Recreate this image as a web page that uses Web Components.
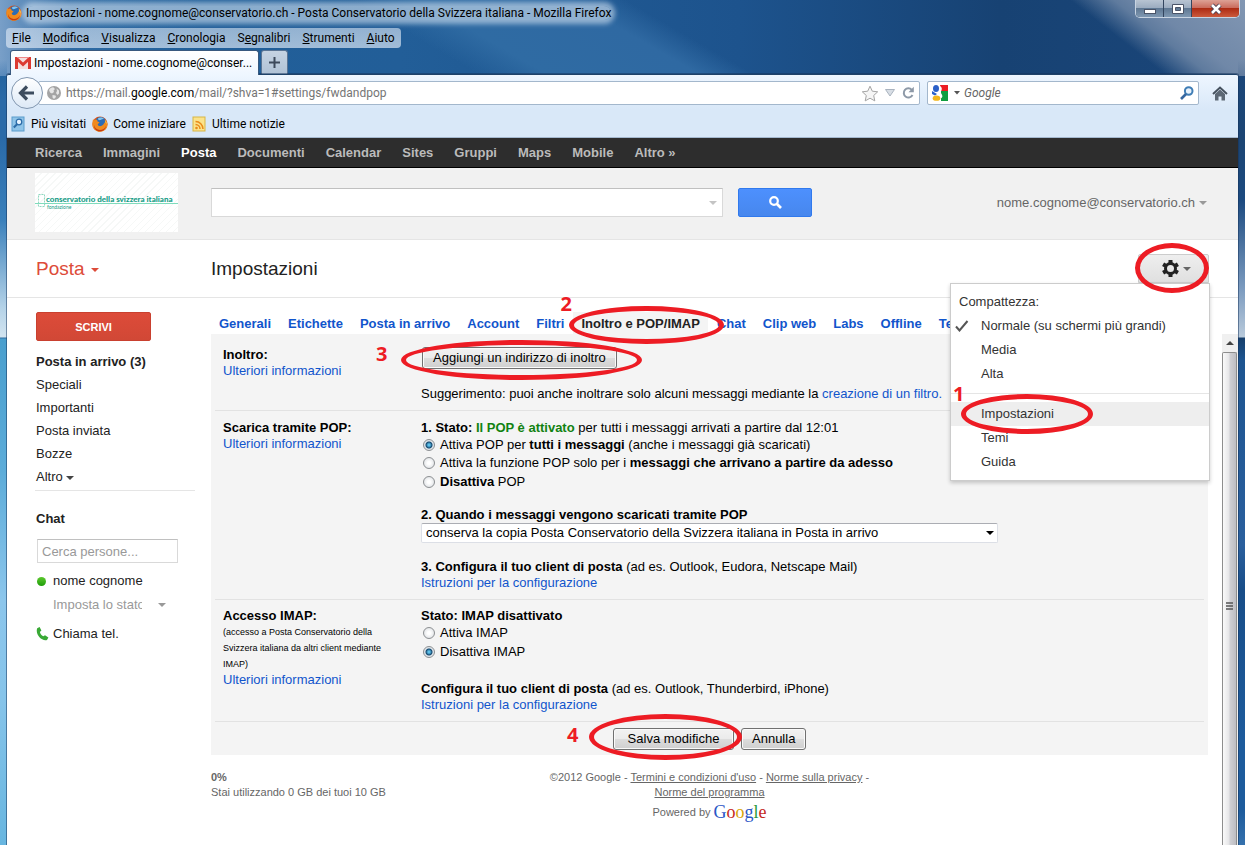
<!DOCTYPE html>
<html lang="it">
<head>
<meta charset="utf-8">
<title>Impostazioni - Posta</title>
<style>
html, body { margin: 0; min-height: 100%; }
body { font: 13px/16px "Liberation Sans", Arial, sans-serif; color: #222; }
</style>
</head>
<body>
<browser-window>
  <title-bar slot="chrome">Impostazioni - nome.cognome@conservatorio.ch - Posta Conservatorio della Svizzera italiana - Mozilla Firefox</title-bar>
  <menu-bar slot="chrome"></menu-bar>
  <tab-strip slot="chrome">Impostazioni - nome.cognome@conser...</tab-strip>
  <nav-toolbar slot="tools"></nav-toolbar>
  <bookmarks-bar slot="tools"></bookmarks-bar>
  <mail-app></mail-app>
</browser-window>

<script>
const define = (name, css, html) => {
  const template = document.createElement('template');
  template.innerHTML = `<style>*,:host{box-sizing:border-box}:host{display:block}a{color:inherit;text-decoration:none}button,input,select{font:inherit;margin:0}${css}</style>${html}`;
  customElements.define(name, class extends HTMLElement {
    constructor() {
      super();
      this.attachShadow({ mode: 'open' }).append(template.content.cloneNode(true));
    }
  });
};

const uiFont = 'font:12px/16px Roboto,"Open Sans",sans-serif;color:#000;';

/* ---------- shared pieces ---------- */

define('drop-arrow', `
  :host{display:inline-block;width:8px;height:4px;border:4px solid transparent;border-top-color:currentColor;border-bottom:0;flex:none}
`, '');

define('firefox-icon', `:host{width:16px;height:16px;flex:none} svg{display:block}`, `
  <svg width="16" height="16" viewBox="0 0 16 16" aria-hidden="true">
    <circle cx="8" cy="8" r="7.6" fill="#d9541b"/>
    <circle cx="8.6" cy="6.4" r="5.4" fill="#2b6cb5"/>
    <path d="M6 2.2c2-1.2 4.600-.8 6 .6-1.500 0-2 .8-3.500 1.200S6 4 6 2.200z" fill="#7fc4ee"/>
    <path d="M1 3.200c.6.2 1 .6 1.300 1.100C3.400 3.500 4.500 3.700 5.400 4c-.4.8 0 1.400.8 1.700.8.200 1.300.3 1.200.9-.2.800-1.700 1-1.600 2 .2 1.600 2.300 2 3.900 1.200 1.700-.8 2.500-2.200 2.600-3.500.5.5.6.9.7 1.300.5-1.500.1-3-.6-4 2.400 1.200 3.400 3.800 2.900 6.500-.7 3.400-3.500 5.600-7.200 5.600C3.800 15.700.4 12.700.4 8.400.4 6.500.7 4.600 1 3.200z" fill="#f08a1c"/>
    <path d="M2 9c.4 3 2.800 4.900 5.800 4.900 3 0 5.200-1.500 6.200-4-.1 3-2.800 5.400-6.200 5.400C4.200 15.300 1.600 12.600 2 9z" fill="#c43c12"/>
    <path d="M13 3.800c1.300 1.200 1.800 3 1.500 4.800-.2-1-.6-1.600-1.100-2 .2-1 .1-2-.4-2.800z" fill="#fbd34a"/>
  </svg>`);

/* A hand-drawn ring with a step number, laid over whatever it wraps */
define('step-mark', `
  :host{display:inline-block;position:relative;vertical-align:top}
  .ring{position:absolute;inset:var(--ring);border:5px solid #ed1c24;border-radius:50%;pointer-events:none;z-index:9}
  .num{position:absolute;left:var(--num-x);top:var(--num-y);font:bold 20px/20px "Open Sans",sans-serif;color:#ed1c24;z-index:9;pointer-events:none}
`, `<slot></slot><span class="ring"></span><span class="num"><slot name="num"></slot></span>`);

/* ---------- browser chrome ---------- */

define('browser-window', `
  :host{min-height:100vh;display:flex;flex-direction:column;padding:0 7px;
    background:
      linear-gradient(180deg,transparent 60px,#2a6aa8 100px,#2a6aa8 137px,#3a80bb 220px,#b5d3e8 308px,#d2e4f0 337px,#2f6da0 338px,#4a9fce 339px,#5cacd9 470px,#8cc6ec 600px,#86c4ea 700px,#68b6e0 845px) left/7px 100% no-repeat,
      linear-gradient(180deg,transparent 60px,#1c4573 140px,#1c4a80 200px,#7d9cc0 290px,#b9cadb 337px,#173f6b 338px,#1d5490 360px,#2a5f9d 545px,#184d88 590px,#1d5b9c 740px,#1d5b9c 810px,#3571ad 845px) right/7px 100% no-repeat,
      linear-gradient(38deg,transparent 56%,#5f7b9e 67%,#7088a8 74%,#8297b3) right top/300px 76px no-repeat,
      linear-gradient(90deg,rgba(150,180,215,.75),rgba(90,140,190,.25) 70px,transparent 200px) left top/100% 76px no-repeat,
      linear-gradient(30deg,transparent 35%,#2f6ba3 40%,#2f69a2 51%,transparent 55%) left top/100% 76px no-repeat,
      linear-gradient(90deg,#20609b,#225e98 400px,#1d538d 740px,#174273 1000px,#1b467a)}
  .tools{border-top:1px solid #1f4268;background:linear-gradient(#eef6ff,#d9e8f8 34px);box-shadow:0 0 0 1px rgba(20,50,90,.5);border-radius:2px 2px 0 0;border-bottom:1px solid #a4b8cf}
  .page{flex:1;display:flex;flex-direction:column;background:#fff;box-shadow:-1px 0 0 rgba(20,50,90,.5),1px 0 0 rgba(20,50,90,.5)}
  ::slotted(mail-app){flex:1}
`, `<slot name="chrome"></slot><div class="tools"><slot name="tools"></slot></div><main class="page"><slot></slot></main>`);

define('title-bar', `
  :host{display:flex;align-items:flex-start;justify-content:space-between;height:26px;${uiFont}}
  .title{display:flex;gap:4px;align-items:center;padding-top:5px;white-space:nowrap;margin-left:-1px}
  .text{background:rgba(225,236,248,.55);box-shadow:0 0 5px 4px rgba(225,236,248,.55);border-radius:8px;line-height:14px}
  .win{display:flex;height:18px;border:1px solid #c8d4e2;border-top:0;border-radius:0 0 5px 5px;margin-right:-2px;box-shadow:inset 0 0 0 1px #2a3c54;overflow:hidden}
  button{border:0;border-right:1px solid #33455e;padding:0;width:28px;background:linear-gradient(#b8c4d2,#9aabbf 48%,#5f7893 50%,#7f98b2);display:grid;place-items:center}
  button.close{width:47px;border-right:0;background:linear-gradient(#dda195,#c9695a 48%,#ad2c14 50%,#cc5a3c)}
`, `<div class="title"><firefox-icon></firefox-icon><span class="text"><slot></slot></span></div>
  <div class="win">
    <button aria-label="Riduci"><svg width="14" height="12"><rect x="1.500" y="6.500" width="11" height="4" fill="#fff" stroke="#4a5468"/></svg></button>
    <button aria-label="Ingrandisci"><svg width="14" height="12"><path d="M1.500 1.500h11v9h-11zM4.500 4.500h5v3h-5z" fill="#fff" fill-rule="evenodd" stroke="#4a5468"/></svg></button>
    <button class="close" aria-label="Chiudi"><svg width="14" height="12"><path d="M3 2l8 8M11 2l-8 8" stroke="#4a4050" stroke-width="4.500"/><path d="M3 2l8 8M11 2l-8 8" stroke="#fff" stroke-width="2.600"/></svg></button>
  </div>`);

define('menu-bar', `
  :host{${uiFont}padding-top:2px;height:24px;margin-left:-1px}
  nav{display:inline-flex;gap:12px;height:20px;align-items:center;padding:0 6px;border-radius:4px;background:linear-gradient(rgba(222,233,246,.6),rgba(222,233,246,.68))}
`, `<nav><a href="#"><u>F</u>ile</a><a href="#"><u>M</u>odifica</a><a href="#"><u>V</u>isualizza</a><a href="#"><u>C</u>ronologia</a><a href="#">S<u>e</u>gnalibri</a><a href="#"><u>S</u>trumenti</a><a href="#"><u>A</u>iuto</a></nav>`);

define('tab-strip', `
  :host{${uiFont}display:flex;gap:2px;height:24px;padding-left:3px}
  .tab{display:flex;align-items:center;gap:3px;width:249px;padding:0 4px;background:linear-gradient(#fff,#eef6ff);border:1px solid #38597f;border-bottom:0;border-radius:3px 3px 0 0;margin-bottom:-1px;white-space:nowrap;position:relative}
  svg{flex:none}
  button{width:27px;border:1px solid #5a7595;border-bottom:0;border-radius:3px 3px 0 0;background:linear-gradient(#c5d3e2,#b0c2d6);padding:0;display:grid;place-items:center}
`, `<div class="tab"><svg width="16" height="12" viewBox="0 0 16 12"><path d="M0 0h16v12H0z" fill="#f4dede"/><path d="M1.500 12V1.500L8 7.500l6.500-6V12" fill="none" stroke="#dc3a32" stroke-width="3"/><path d="M2 .5h12" stroke="#e88"/></svg><span><slot></slot></span></div>
  <button aria-label="Nuova scheda"><svg width="11" height="11"><path d="M5.500 0v11M0 5.500h11" stroke="#3d4a5c" stroke-width="2"/></svg></button>`);

define('nav-toolbar', `
  :host{${uiFont}display:flex;align-items:center;height:36px;padding:0 10px 0 4px}
  .back{width:32px;height:32px;border-radius:50%;border:1px solid #8297b0;background:linear-gradient(#fff,#dde9f6);padding:0;display:grid;place-items:center;flex:none;z-index:1}
  .field{display:flex;align-items:center;height:24px;background:#fff;border:1px solid #a3b7cc;border-radius:2px}
  .url{flex:1;margin-left:-5px;padding:0 4px 0 8px}
  .url p{flex:1;margin:0 0 0 5px;color:#757575} .url b{font-weight:400;color:#000}
  .search{width:272px;margin:0 13px 0 7px;padding:0 4px}
  input{flex:1;min-width:0;border:0;background:none;padding:0 4px;outline:0;font-style:italic;line-height:20px}
  input::placeholder{color:#666;opacity:1}
  svg{flex:none} .gap{margin:0 6px}
  .home{border:0;background:none;padding:0;display:grid}
`, `<button class="back" aria-label="Indietro"><svg width="18" height="16" viewBox="0 0 18 16"><path d="M9 1.500L2.500 8 9 14.500M3 8h13" fill="none" stroke="#3d4c5e" stroke-width="3.200"/></svg></button>
  <div class="field url">
    <svg width="14" height="14" viewBox="0 0 14 14"><circle cx="7" cy="7" r="7" fill="#a4a4a4"/><path d="M2 4c1-2 3-2.800 4.500-2.600L8 3 6.500 4.500 7 6 5 7.500 3 6.500zM9.500 2.500l2.500 2v3L10.500 9 9 7l1-2zM5.500 9l3 .5.5 1.500-2 2-1.500-1.500z" fill="#e6e6e6"/></svg>
    <p>https://mail.<b>google.com</b>/mail/?shva=1#settings/fwdandpop</p>
    <svg width="18" height="17" viewBox="0 0 18 17"><path d="M9 1.200l2.300 5 5.400.6-4 3.700 1.100 5.400L9 13.200l-4.800 2.700 1.100-5.400-4-3.700 5.400-.6z" fill="#f5f5f5" stroke="#a5a5a5"/></svg>
    <svg class="gap" width="10" height="8"><path d="M.5.5h9L5 7z" fill="#d8dee5" stroke="#a9b3bf"/></svg>
    <svg width="14" height="14" viewBox="0 0 14 14"><path d="M10.800 3.800A4.600 4.600 0 1 0 11.500 9" fill="none" stroke="#8d99a7" stroke-width="2"/><path d="M12.800.8v5.500H7.500z" fill="#8d99a7"/></svg>
  </div>
  <div class="field search">
    <svg width="16" height="16" viewBox="0 0 16 16"><path d="M8 0h8v6H9z" fill="#ec1c24"/><path d="M9 6h7v10H9z" fill="#0f9d3f"/><ellipse cx="4" cy="3.500" rx="3" ry="3.500" fill="#2a60c8"/><path d="M0 6l5 3-2 1.500L0 9z" fill="#2a60c8"/><path d="M8 1c4 3 0 5 1 7s3 4-1 6l-2-4 1-4z" fill="#fff"/><ellipse cx="4.500" cy="13.200" rx="3.800" ry="2.600" fill="#f2b61b"/></svg>
    <svg class="gap" style="margin-right:0" width="6" height="4"><path d="M0 0h6L3 3.500z" fill="#555"/></svg>
    <input aria-label="Cerca" placeholder="Google">
    <svg width="14" height="14" viewBox="0 0 14 14"><circle cx="8.700" cy="5" r="3.800" fill="#e8f2fc" stroke="#3f7db5" stroke-width="2"/><path d="M6 8l-5 5" stroke="#3567a0" stroke-width="2.600"/></svg>
  </div>
  <button class="home" aria-label="Home"><svg width="16" height="15" viewBox="0 0 16 15"><path d="M1 8l7-6.500L15 8" fill="none" stroke="#46525f" stroke-width="2"/><path d="M3 8l5-4.500L13 8v6.500H9.500v-4h-3v4H3z" fill="#5c6875"/></svg></button>`);

define('bookmarks-bar', `
  :host{${uiFont}height:26px;padding:0 4px}
  nav{display:flex;gap:6px;height:100%;align-items:center}
  a{display:flex;gap:5px;align-items:center}
`, `<nav>
  <a href="#"><svg width="15" height="16" viewBox="0 0 15 16"><rect x="1" y="1" width="12" height="14" fill="#8fc4e8" stroke="#5a9ccc"/><circle cx="8" cy="6" r="2.800" fill="#e6f4ff" stroke="#2c6ca8" stroke-width="1.300"/><path d="M6 8.200L2.800 11.500" stroke="#2c6ca8" stroke-width="2"/></svg>Più visitati</a>
  <a href="#"><firefox-icon></firefox-icon>Come iniziare</a>
  <a href="#"><svg width="15" height="16" viewBox="0 0 15 16"><rect x="1" y="1" width="12" height="14" fill="#fbe38b" stroke="#d8b545"/><circle cx="4.500" cy="12" r="1.300" fill="#e98b1a"/><path d="M3.500 8.500a4.500 4.500 0 0 1 4.500 4.500M3.500 5.500A7.500 7.500 0 0 1 11 13" fill="none" stroke="#e98b1a" stroke-width="1.500"/></svg>Ultime notizie</a>
</nav>`);

/* ---------- mail application ---------- */

define('google-bar', `
  :host{background:#2d2d2d;border-bottom:1px solid #000;height:30px}
  nav{display:flex;gap:21px;height:100%;align-items:center;padding:1px 0 0 28px;font-weight:bold;color:#bbb}
  .on{color:#fff}
`, `<nav><a href="#">Ricerca</a><a href="#">Immagini</a><a href="#" class="on">Posta</a><a href="#">Documenti</a><a href="#">Calendar</a><a href="#">Sites</a><a href="#">Gruppi</a><a href="#">Maps</a><a href="#">Mobile</a><a href="#">Altro »</a></nav>`);

define('mail-header', `
  :host{display:flex;align-items:center;height:72px;background:#f1f1f1;border-bottom:1px solid #e5e5e5;padding:0 31px 2px 28px}
  .logo{width:143px;height:59px;margin-right:33px;background:repeating-linear-gradient(135deg,#fff 0 4px,#f6f8f7 4px 5px);display:flex;flex-direction:column;justify-content:center;color:#159c86;white-space:nowrap;position:relative}
  .logo .name{font:900 8px/8px Lato,sans-serif;padding-left:11px;border-bottom:1px solid #7fdcbc}
  .logo .sub{font:5px/6px Lato,sans-serif;padding-left:12px}
  .logo svg{position:absolute;left:2px;top:20px}
  .box{width:512px;height:29px;display:grid;align-items:center;margin-right:15px;color:#c4c4c4}
  .box>*{grid-area:1/1}
  .box drop-arrow{justify-self:end;margin-right:6px}
  input{width:100%;height:100%;border:1px solid #d9d9d9;border-top-color:#c0c0c0;background:#fff;padding:0 8px}
  button.go{width:74px;height:29px;border:1px solid #3079ed;border-radius:2px;background:linear-gradient(#4d90fe,#4787ed);display:grid;place-items:center;padding:0}
  .who{margin-left:auto;color:#666;display:flex;gap:4px;align-items:center;border:0;background:none;padding:0;line-height:16px}
  .who drop-arrow{color:#999}
`, `<div class="logo"><svg width="9" height="15"><path d="M1.500 1.500h6v12h-6z" fill="none" stroke="#8fd8c0" stroke-dasharray="2 1"/></svg><span class="name">conservatorio della svizzera italiana</span><span class="sub">fondazione</span></div>
  <div class="box"><input aria-label="Cerca nella posta"><drop-arrow></drop-arrow></div>
  <button class="go" aria-label="Cerca"><svg width="13" height="13" viewBox="0 0 13 13"><circle cx="5" cy="5" r="3.800" fill="none" stroke="#fff" stroke-width="2.200"/><path d="M8 8l4 4" stroke="#fff" stroke-width="2.600"/></svg></button>
  <button class="who">nome.cognome@conservatorio.ch <drop-arrow></drop-arrow></button>`);

define('mail-toolbar', `
  :host{display:flex;align-items:center;height:58px;border-bottom:1px solid #e5e5e5;padding:0 29px;font-size:19px;line-height:24px}
  .posta{width:175px;color:#dd4b39;border:0;background:none;padding:0;display:flex;gap:6px;align-items:center}
  h1{flex:1;font:inherit;margin:0}
  .posta drop-arrow{margin-top:2px}
`, `<button class="posta">Posta <drop-arrow></drop-arrow></button><h1>Impostazioni</h1><gear-menu></gear-menu>`);

define('gear-menu', `
  :host{position:relative;font-size:13px;line-height:24px;z-index:5}
  .gear{--ring:-11px 0 -10px -3px;display:block}
  .gear button{width:71px;height:29px;border:1px solid #ccc;border-radius:2px 2px 0 0;background:linear-gradient(#eee,#e0e0e0);display:flex;gap:4px;align-items:center;justify-content:center;color:#666;padding:0 0 0 6px}
  .menu{position:absolute;top:29px;right:-1px;width:260px;background:#fff;border:1px solid #ccc;box-shadow:0 2px 4px rgba(0,0,0,.2);padding:6px 0;color:#333}
  p{margin:0;padding-left:8px}
  a{display:grid;grid-template-columns:22px 1fr;align-items:center;padding-left:8px}
  a>*{grid-column:2;justify-self:start}
  a svg{grid-column:1;margin-left:-4px}
  a svg+span{grid-row:1} a svg{grid-row:1}
  a.on{background:#eee}
  hr{border:0;border-top:1px solid #e5e5e5;margin:7px 0 8px}
  .one{--ring:-8px -39px -8px -20px;--num-x:-28px;--num-y:-18px}
`, `<step-mark class="gear"><button aria-label="Impostazioni"><svg width="17" height="17" viewBox="0 0 17 17"><circle cx="8.500" cy="8.500" r="5" fill="none" stroke="#222" stroke-width="3"/><path d="M8.500 0v3M8.500 14v3M1.100 4.300l2.600 1.500M13.300 11.200l2.600 1.500M1.100 12.700l2.600-1.500M13.300 5.800l2.600-1.500" stroke="#222" stroke-width="4"/></svg><drop-arrow></drop-arrow></button></step-mark>
  <nav class="menu"><p>Compattezza:</p>
    <a href="#"><svg width="14" height="12"><path d="M1 6.500l3.500 4L12.500 1" fill="none" stroke="#555" stroke-width="2"/></svg><span>Normale (su schermi più grandi)</span></a>
    <a href="#"><span>Media</span></a><a href="#"><span>Alta</span></a><hr>
    <a href="#" class="on"><step-mark class="one">Impostazioni<span slot="num">1</span></step-mark></a>
    <a href="#"><span>Temi</span></a><a href="#"><span>Guida</span></a></nav>`);

define('side-nav', `
  :host{padding:14px 16px 0 29px}
  .write{display:block;width:115px;height:29px;border:1px solid #c9402f;border-radius:2px;background:linear-gradient(#dd4b39,#d14836);color:#fff;font-weight:bold;font-size:11px;padding:0;margin-bottom:9px}
  nav{display:flex;flex-direction:column;border-bottom:1px solid #e5e5e5;padding-bottom:2px;line-height:23px;margin-left:-1px;padding-left:1px}
  nav .more,.me{display:flex;align-items:center;gap:3px}
  .more drop-arrow{color:#444;margin-top:2px}
  h2{font-size:13px;line-height:16px;margin:20px 0 12px}
  .find{display:block;width:141px;height:24px;margin-left:1px;border:1px solid #d9d9d9;border-top-color:#c0c0c0;padding:0 4px}
  input::placeholder{color:#999;opacity:1}
  .me{gap:7px;margin-top:10px}
  .dot{width:9px;height:9px;margin-left:1px;border-radius:50%;background:linear-gradient(#5cc82e,#1f9d0a)}
  .state{display:flex;align-items:center;margin:8px 0 0 17px;color:#999;gap:16px}
  .state input{width:89px;height:16px;border:0;padding:0;background:none;color:inherit}
  .tel{margin-top:13px;gap:4px}
`, `<button class="write">SCRIVI</button>
  <nav><a href="#"><b>Posta in arrivo (3)</b></a><a href="#">Speciali</a><a href="#">Importanti</a><a href="#">Posta inviata</a><a href="#">Bozze</a><a href="#" class="more">Altro <drop-arrow></drop-arrow></a></nav>
  <h2>Chat</h2><input class="find" aria-label="Cerca persone" placeholder="Cerca persone...">
  <div class="me"><span class="dot"></span>nome cognome</div>
  <div class="state"><input aria-label="Stato" value="Imposta lo stato"><drop-arrow></drop-arrow></div>
  <a href="#" class="me tel"><svg width="13" height="14" viewBox="0 0 13 14"><path d="M1.200 1.200L3.600 0l1.800 3.600-1.500 1.400c.3 1.800 1.600 3.500 3.400 4.200L9 8.200l3.400 2.200-1.400 2.600C5.500 14.500-1 7.500 1.200 1.200z" fill="#39a935"/></svg>Chiama tel.</a>`);

define('settings-tabs', `
  nav{display:flex;gap:1px;align-items:flex-end;height:36px;font-weight:bold;color:#15c;white-space:nowrap}
  a{padding:4px 8px 2px;line-height:16px}
  .on{background:#f4f4f4;color:#222}
  .two{--ring:-10px -24px -12px -12px;--num-x:-21px;--num-y:-22px}
`, `<nav><a href="#">Generali</a><a href="#">Etichette</a><a href="#">Posta in arrivo</a><a href="#">Account</a><a href="#">Filtri</a><a href="#" class="on"><step-mark class="two">Inoltro e POP/IMAP<span slot="num">2</span></step-mark></a><a href="#">Chat</a><a href="#">Clip web</a><a href="#">Labs</a><a href="#">Offline</a><a href="#">Temi</a></nav>`);

define('settings-row', `
  :host{display:grid;grid-template-columns:198px 1fr;margin:0 4px;padding:8px;border-bottom:1px solid #e2e2e2}
  .label{padding-right:24px}
`, `<div class="label"><slot name="label"></slot></div><div><slot></slot></div>`);

define('settings-panel', `
  :host{background:#f4f4f4;color:#000}
  settings-row.forward{padding-top:13px}
  settings-row.pop{padding-top:9px}
  a{color:#15c}
  small{display:block;font-size:9px;line-height:16px}
  .green{color:#118211}
  p{margin:0}
  .tip{margin-top:17px}
  .opt{display:flex;gap:5px;align-items:center;line-height:18px}
  .opt.last{line-height:19px}
  .opt input{appearance:none;width:12px;height:12px;border:1px solid #8c8f92;border-radius:50%;background:radial-gradient(#fff 20%,#d5d9dd);margin:0 0 0 2px;flex:none}
  .opt input:checked{background:radial-gradient(circle,#5cc0ea 0 1px,#14486f 3px,#dfe5ea 4px)}
  .block{margin-top:16px}
  .client{margin-top:20px}
  .select{display:grid;width:577px;max-width:100%;align-items:center}
  .select>*{grid-area:1/1}
  .select drop-arrow{justify-self:end;margin-right:4px}
  select{appearance:none;height:20px;border:1px solid #dcdfe6;border-top-color:#abadb3;border-radius:2px;background:#fff;padding:0 4px;color:#000;width:100%}
  button{height:22px;border:1px solid #707070;border-radius:3px;padding:0 10px;color:#000;background:linear-gradient(#f2f2f2,#ebebeb 48%,#ddd 50%,#cfcfcf);box-shadow:inset 0 0 0 1px #fafafa}
  .actions{display:flex;gap:7px;padding:6px 0 5px 402px}
  .three{--ring:-7px -25px -11px -21px;--num-x:-46px;--num-y:-3px;margin-left:1px}
  .four{--ring:-14px -8px -10px -24px;--num-x:-46px;--num-y:-3px}
  .three button,.four button{display:block}
  .four button{min-width:121px}
`, `<settings-row class="forward"><div slot="label"><b>Inoltro:</b><br><a href="#">Ulteriori informazioni</a></div>
    <step-mark class="three"><button>Aggiungi un indirizzo di inoltro</button><span slot="num">3</span></step-mark>
    <p class="tip">Suggerimento: puoi anche inoltrare solo alcuni messaggi mediante la <a href="#">creazione di un filtro.</a></p></settings-row>
  <settings-row class="pop"><div slot="label"><b>Scarica tramite POP:</b><br><a href="#">Ulteriori informazioni</a></div>
    <p><b>1. Stato: <span class="green">Il POP è attivato</span></b> per tutti i messaggi arrivati a partire dal 12:01</p>
    <label class="opt"><input type="radio" name="pop" checked><span>Attiva POP per <b>tutti i messaggi</b> (anche i messaggi già scaricati)</span></label>
    <label class="opt"><input type="radio" name="pop"><span>Attiva la funzione POP solo per i <b>messaggi che arrivano a partire da adesso</b></span></label>
    <label class="opt last"><input type="radio" name="pop"><span><b>Disattiva</b> POP</span></label>
    <p class="block"><label for="keep"><b>2. Quando i messaggi vengono scaricati tramite POP</b></label></p>
    <div class="select"><select id="keep"><option>conserva la copia Posta Conservatorio della Svizzera italiana in Posta in arrivo</option></select><drop-arrow></drop-arrow></div>
    <p class="block"><b>3. Configura il tuo client di posta</b> (ad es. Outlook, Eudora, Netscape Mail)</p>
    <p><a href="#">Istruzioni per la configurazione</a></p></settings-row>
  <settings-row><div slot="label"><b>Accesso IMAP:</b><small>(accesso a Posta Conservatorio della Svizzera italiana da altri client mediante IMAP)</small><a href="#">Ulteriori informazioni</a></div>
    <p><b>Stato: IMAP disattivato</b></p>
    <label class="opt"><input type="radio" name="imap"><span>Attiva IMAP</span></label>
    <label class="opt last"><input type="radio" name="imap" checked><span>Disattiva IMAP</span></label>
    <p class="client"><b>Configura il tuo client di posta</b> (ad es. Outlook, Thunderbird, iPhone)</p>
    <p><a href="#">Istruzioni per la configurazione</a></p></settings-row>
  <div class="actions"><step-mark class="four"><button>Salva modifiche</button><span slot="num">4</span></step-mark><button>Annulla</button></div>`);

define('page-footer', `
  :host{display:grid;grid-template-columns:1fr 320px 1fr;padding-top:15px;font-size:11px;line-height:15px;color:#666}
  p{margin:0;text-align:center} a{text-decoration:underline}
  .pow{display:flex;justify-content:center;align-items:center;gap:3px}
  .g{font:18px/24px "Liberation Serif",serif;color:#2a56c6;-webkit-text-stroke:1px transparent}
  .r{color:#c5281c}.y{color:#d9a406}.n{color:#2a9a3a}
`, `<div><b>0%</b><br>Stai utilizzando 0 GB dei tuoi 10 GB</div>
  <div><p>©2012 Google - <a href="#">Termini e condizioni d'uso</a> - <a href="#">Norme sulla privacy</a> - <a href="#">Norme del programma</a></p>
  <div class="pow">Powered by <span class="g">G<span class="r">o</span><span class="y">o</span>g<span class="n">l</span><span class="r">e</span></span></div></div>`);

define('scroll-track', `
  :host{display:flex;flex-direction:column;width:16px;background:#f0f0f0}
  .up{height:18px;display:grid;place-items:center;border:0;background:none;padding:0}
  .thumb{flex:1;width:15px;border:1px solid #8d8d8d;border-bottom:0;border-radius:2px 2px 0 0;background:linear-gradient(90deg,#fafafa,#e6e6e8 45%,#cfcfd3 55%,#bdbdc2);display:grid;place-items:center;padding-bottom:0}
  .thumb svg{margin-top:14px}
`, `<button class="up" aria-label="Su"><svg width="8" height="4"><path d="M0 4h8L4 0z" fill="#444"/></svg></button>
  <div class="thumb"><svg width="8" height="9"><path d="M0 1h7M0 4h7M0 7h7" stroke="#555" stroke-width="1.500"/></svg></div>`);

define('mail-app', `
  :host{display:flex;flex-direction:column}
  .body{flex:1;display:grid;grid-template-columns:204px 1fr}
  .right{display:flex;flex-direction:column;min-width:0}
  .scroll{flex:1;display:flex;gap:14px}
  .content{flex:1}
`, `<google-bar></google-bar><mail-header></mail-header><mail-toolbar></mail-toolbar>
  <div class="body"><side-nav></side-nav>
    <div class="right"><settings-tabs></settings-tabs>
      <div class="scroll"><div class="content"><settings-panel></settings-panel><page-footer></page-footer></div><scroll-track></scroll-track></div></div></div>`);
</script>
</body>
</html>
